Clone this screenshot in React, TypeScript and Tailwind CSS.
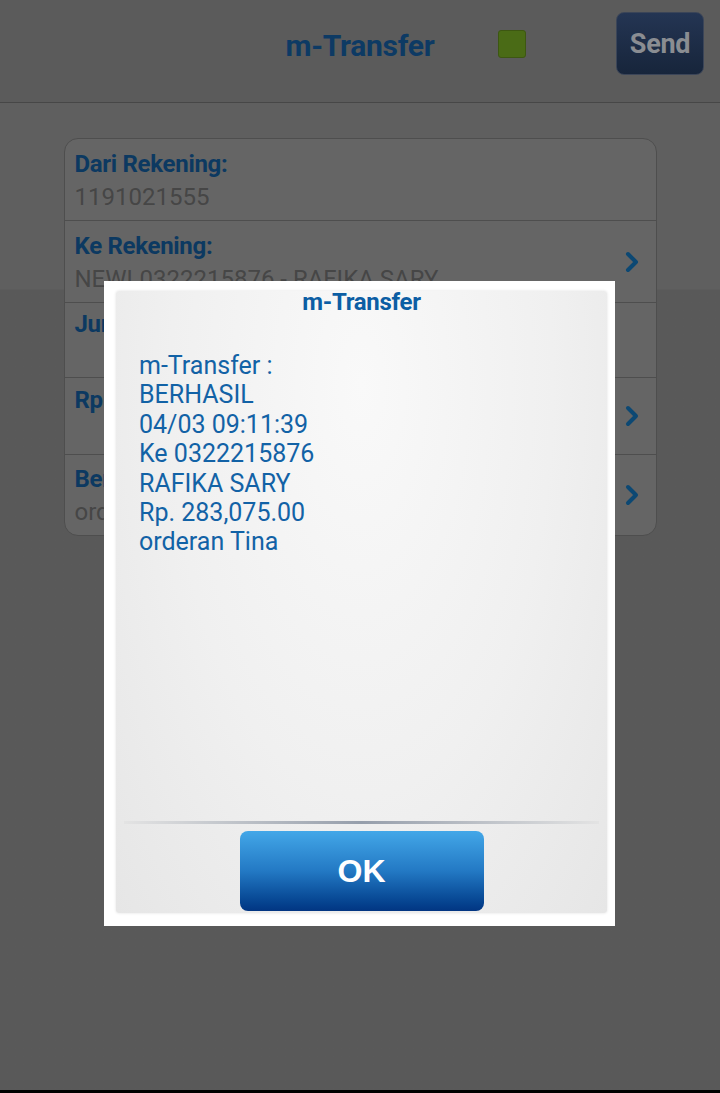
import React from "react";

const rows = [
  { label: "Dari Rekening:", value: "1191021555", arrow: false, h: "h-[81px]" },
  { label: "Ke Rekening:", value: "NEWL0322215876 - RAFIKA SARY", arrow: true, h: "h-[82px]" },
  { label: "Jumlah:", value: "", arrow: false, h: "h-[75px]" },
  { label: "Rp", value: "", arrow: true, h: "h-[77px]" },
  { label: "Berita:", value: "orderan Tina", arrow: true, h: "h-[81px]" },
];

const lines = [
  "m-Transfer :",
  "BERHASIL",
  "04/03 09:11:39",
  "Ke 0322215876",
  "RAFIKA SARY",
  "Rp. 283,075.00",
  "orderan Tina",
];

function Chevron() {
  return (
    <svg width="16" height="22" viewBox="0 0 16 22" className="shrink-0">
      <path
        d="M4 3 L12 11 L4 19"
        fill="none"
        stroke="#0c4873"
        strokeWidth="4"
        strokeLinecap="round"
        strokeLinejoin="round"
      />
    </svg>
  );
}

export default function App() {
  return (
    <div className="relative h-[1093px] w-[720px] overflow-hidden bg-[#5a5a5a] font-['Roboto',sans-serif]">
      {/* Header */}
      <header className="h-[103px] border-b border-[#474747] bg-[#5b5b5b] pt-[12px]">
        <div className="grid h-[63px] grid-cols-[1fr_auto_1fr] items-center">
          <div />
          <h1 className="pt-[4px] text-[30px] font-bold tracking-[-0.3px] text-[#0d3a64]">m-Transfer</h1>
          <div className="flex items-center pl-[64px] pr-4">
            <div className="h-[28px] w-[28px] rounded-[3px] border border-[#3d5712] bg-[#4a6b16]" />
            <button className="ml-auto flex h-[63px] w-[88px] items-center justify-center rounded-lg border border-[#3b4558] bg-gradient-to-b from-[#243553] to-[#17253b] pt-[2px] text-[27px] font-bold tracking-[-0.3px] text-[#8a8d92]">
              Send
            </button>
          </div>
        </div>
      </header>

      {/* Body */}
      <main className="bg-gradient-to-b from-[#5f5f5f] from-[186px] to-[#595959] to-[187px] pt-[35px] pb-[556px]">
        <div className="mx-auto w-[593px] overflow-hidden rounded-[14px] border border-[#4e4e4e] bg-[#656565]">
          {rows.map((r, i) => (
            <div
              key={i}
              className={`flex items-center pl-[10px] pr-[16px] ${r.h} ${
                i > 0 ? "border-t border-[#4e4e4e]" : ""
              }`}
            >
              <div className="flex-1 pt-[2px]">
                <div className="text-[24px] font-bold leading-[33px] tracking-[-0.3px] text-[#0c3961]">{r.label}</div>
                <div className="h-[33px] text-[24px] leading-[33px] text-[#464646]">{r.value}</div>
              </div>
              {r.arrow && <Chevron />}
            </div>
          ))}
        </div>
      </main>

      <div className="absolute bottom-0 left-0 h-[3px] w-full bg-black" />

      {/* Dialog */}
      <div className="absolute left-[104px] top-[281px] flex h-[645px] w-[511px] bg-white pb-[13px] pl-[12px] pr-[8px] pt-[10px]">
        <div className="flex flex-1 flex-col rounded-[3px] bg-[radial-gradient(ellipse_at_50%_15%,#f9f9f9_0%,#f0f0f0_55%,#e6e6e6_100%)] shadow-[0_0_3px_rgba(0,0,0,0.12)]">
          <h2 className="text-center text-[24px] font-bold leading-[22px] tracking-[-0.3px] text-[#0c5ea4]">
            m-Transfer
          </h2>
          <div className="flex-1 pl-[23px] pt-[38px]">
            {lines.map((l, i) => (
              <div key={i} className="text-[25px] leading-[29.4px] text-[#1262a6]">
                {l}
              </div>
            ))}
          </div>
          <div className="mx-[8px] h-[3px] bg-[linear-gradient(to_right,#e2e2e2,#7f8a9a_50%,#e2e2e2)] opacity-80" />
          <div className="flex justify-center pb-[2px] pt-[7px]">
            <button className="flex h-[80px] w-[244px] items-center justify-center rounded-[8px] bg-gradient-to-b from-[#43a7e8] via-[#2379c4] to-[#023582] font-['Liberation_Sans',sans-serif] text-[32px] font-bold text-white">
              OK
            </button>
          </div>
        </div>
      </div>
    </div>
  );
}
